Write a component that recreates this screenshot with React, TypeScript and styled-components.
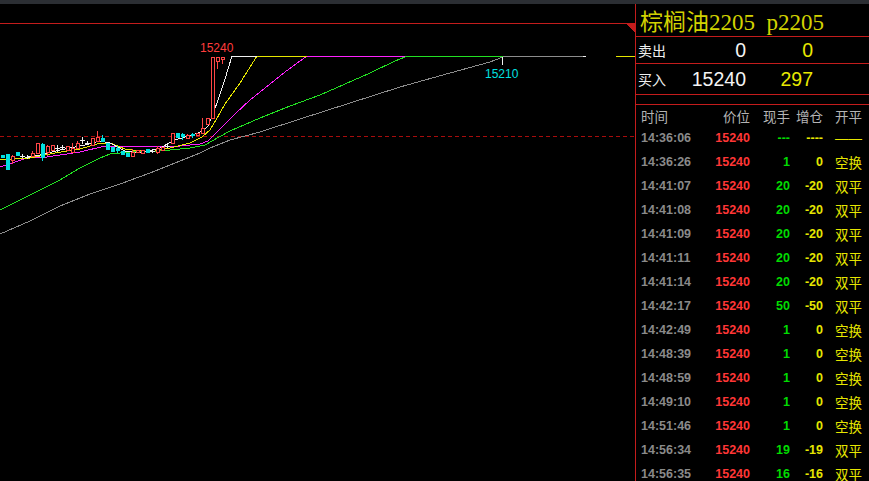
import React from "react"
import styled, { createGlobalStyle } from "styled-components"

const GlobalStyle = createGlobalStyle`
  html, body {
    margin: 0;
    padding: 0;
    background: #000;
    overflow: hidden;
  }
  #root {
    width: 869px;
    height: 481px;
  }
`;

const RED = "#c41c1c";

const Page = styled.div`
  width: 869px;
  height: 481px;
  background: #000;
  display: flex;
  flex-direction: column;
  font-family: "Liberation Sans", "Noto Sans CJK SC", sans-serif;
`;

const TopStrip = styled.div`
  height: 4px;
  background: #2b2e33;
  flex-shrink: 0;
`;

const Main = styled.div`
  flex: 1;
  display: flex;
  min-height: 0;
`;

const ChartArea = styled.div`
  width: 635px;
  flex-shrink: 0;
  svg {
    display: block;
  }
`;

const SidePanel = styled.div`
  flex: 1;
  border-left: 1px solid ${RED};
  display: flex;
  flex-direction: column;
  overflow: hidden;
  & > * {
    flex-shrink: 0;
  }
`;

const Title = styled.div`
  height: 32px;
  border-bottom: 1px solid ${RED};
  display: flex;
  align-items: center;
  padding-left: 4px;
  font-family: "Liberation Serif", "Noto Sans CJK SC", serif;
  font-size: 23px;
  color: #d2d200;
  white-space: pre;
`;

const QuoteRow = styled.div<{ h: number }>`
  height: ${p => p.h}px;
  border-bottom: 1px solid ${RED};
  display: grid;
  grid-template-columns: 40px 68px 67px;
  align-items: center;
  padding-left: 2px;
`;

const QuoteLabel = styled.span`
  font-family: "Noto Sans CJK SC", sans-serif;
  font-size: 14px;
  color: #f0f0f0;
`;

const QuoteValue = styled.span<{ yellow?: boolean }>`
  text-align: right;
  font-size: 19.5px;
  color: ${p => (p.yellow ? "#e8e800" : "#f4f4f4")};
`;

const Spacer = styled.div`
  height: 9px;
  border-bottom: 1px solid ${RED};
`;

const TableGrid = styled.div`
  display: grid;
  grid-template-columns: 70px 39px 40px 33px 1fr;
  grid-auto-rows: 24px;
  grid-template-rows: 21px;
  padding-left: 5px;
  align-items: center;
`;

const HeadCell = styled.span<{ right?: boolean; pad?: boolean }>`
  font-family: "Noto Sans CJK SC", sans-serif;
  font-size: 13.5px;
  color: #b4b4b4;
  text-align: ${p => (p.right ? "right" : "left")};
  padding-left: ${p => (p.pad ? "12px" : "0")};
`;

const Cell = styled.span<{ color: string; right?: boolean }>`
  font-size: 12.5px;
  font-weight: bold;
  color: ${p => p.color};
  text-align: ${p => (p.right ? "right" : "left")};
  white-space: nowrap;
`;

const KindCell = styled.span<{ dash?: boolean }>`
  font-family: ${p => (p.dash ? `"Liberation Sans", sans-serif` : `"Noto Sans CJK SC", sans-serif`)};
  font-size: 13.5px;
  color: #e6e600;
  padding-left: 12px;
  white-space: nowrap;
`;

type Trade = [string, string, string, string, string];

const trades: Trade[] = [
  ["14:36:06", "15240", "---", "----", "——"],
  ["14:36:26", "15240", "1", "0", "空换"],
  ["14:41:07", "15240", "20", "-20", "双平"],
  ["14:41:08", "15240", "20", "-20", "双平"],
  ["14:41:09", "15240", "20", "-20", "双平"],
  ["14:41:11", "15240", "20", "-20", "双平"],
  ["14:41:14", "15240", "20", "-20", "双平"],
  ["14:42:17", "15240", "50", "-50", "双平"],
  ["14:42:49", "15240", "1", "0", "空换"],
  ["14:48:39", "15240", "1", "0", "空换"],
  ["14:48:59", "15240", "1", "0", "空换"],
  ["14:49:10", "15240", "1", "0", "空换"],
  ["14:51:46", "15240", "1", "0", "空换"],
  ["14:56:34", "15240", "19", "-19", "双平"],
  ["14:56:35", "15240", "16", "-16", "双平"],
];

// x, bodyTop, bodyBottom, kind, wickTop, wickBottom
type Candle = [number, number, number, "r" | "c" | "w", number?, number?];

const candles: Candle[] = [
  [2, 155, 158, "c"],
  [7, 154, 170, "c"],
  [12, 156, 160, "r", 155, 164],
  [17, 152, 156, "c"],
  [22, 156, 156, "w", 154, 158],
  [27, 157, 157, "w", 155, 159],
  [32, 153, 156, "r", 151],
  [37, 143, 153, "r"],
  [42, 144, 158, "c", 143, 161],
  [47, 146, 152, "r", 145, 156],
  [52, 145, 150, "r"],
  [57, 148, 148, "w", 145, 152],
  [62, 147, 147, "w", 145, 150],
  [67, 146, 150, "r"],
  [72, 148, 152, "r", 143],
  [77, 143, 148, "r", 141],
  [82, 140, 140, "w", 137, 144],
  [87, 143, 143, "w", 141, 145],
  [92, 138, 145, "r"],
  [97, 137, 141, "r", 131],
  [102, 138, 142, "c", 135],
  [107, 143, 150, "c"],
  [112, 147, 152, "c"],
  [117, 148, 151, "c", 146, 153],
  [122, 151, 155, "c"],
  [127, 153, 157, "c"],
  [132, 152, 156, "r", 149],
  [137, 150, 152, "r"],
  [142, 150, 153, "r"],
  [147, 149, 153, "c"],
  [152, 151, 151, "w", 149, 153],
  [157, 148, 152, "r", 146, 154],
  [162, 147, 150, "r"],
  [167, 146, 146, "w", 143, 148],
  [172, 133, 143, "r"],
  [177, 133, 138, "c"],
  [182, 134, 137, "c", 133, 140],
  [187, 135, 138, "r", 134, 139],
  [192, 134, 136, "c", 133, 138],
  [197, 133, 135, "r"],
  [202, 128, 133, "r", 118],
  [207, 118, 124, "r"],
  [212, 57, 118, "r"],
  [217, 57, 61, "r", 57, 69],
  [222, 57, 59, "r", 57, 64],
];

const pts = (a: number[][]) => a.map(p => p.join(",")).join(" ");

const grayLine = pts([
  [0, 234], [30, 221], [60, 206], [90, 194], [120, 184], [150, 173], [180, 161],
  [200, 153], [210, 148], [230, 140], [260, 132], [300, 119], [350, 103], [400, 87],
  [450, 73], [490, 62], [503, 57], [503, 56], [583, 56],
]);
const greenLine = pts([
  [0, 210], [30, 195], [60, 180], [80, 168], [100, 158], [110, 154], [130, 152],
  [160, 151], [190, 148], [205, 145], [212, 141], [230, 131], [260, 118], [290, 106],
  [320, 95], [345, 84], [370, 73], [395, 61], [405, 57], [405, 56], [503, 56],
]);
const magentaLine = pts([
  [0, 167], [30, 157], [40, 158], [60, 155], [80, 152], [105, 146], [115, 146],
  [150, 147], [180, 146], [200, 144], [208, 141], [220, 129], [235, 114], [250, 100],
  [265, 88], [285, 72], [300, 61], [307, 56], [405, 56],
]);
const yellowLine = pts([
  [0, 160], [30, 158], [55, 153], [80, 149], [100, 143], [110, 143], [125, 149],
  [150, 152], [170, 148], [190, 143], [202, 137], [210, 130], [216, 120], [225, 104],
  [240, 83], [257, 56], [307, 56],
]);
const whiteLine = pts([
  [28, 157], [40, 155], [60, 150], [85, 145], [100, 141], [110, 143], [125, 151],
  [140, 153], [160, 148], [175, 140], [195, 134], [203, 131], [208, 126], [213, 114],
  [218, 100], [225, 79], [232, 56], [257, 56],
]);

const Chart: React.FC = () => (
  <svg width={635} height={477} viewBox="0 4 635 477" shapeRendering="crispEdges">
    <line x1={0} y1={23.5} x2={626} y2={23.5} stroke={RED} />
    <polygon points="626,23 635,23 635,33" fill={RED} />
    <line x1={0} y1={136.5} x2={635} y2={136.5} stroke="#a80c0c" strokeDasharray="4 3" />
    <polyline points={grayLine} fill="none" stroke="#8c8c8c" />
    <polyline points={greenLine} fill="none" stroke="#22e022" />
    <polyline points={magentaLine} fill="none" stroke="#ff20ff" />
    <polyline points={yellowLine} fill="none" stroke="#e6e600" />
    <polyline points={whiteLine} fill="none" stroke="#f0f0f0" />
    <line x1={616} y1={56.5} x2={635} y2={56.5} stroke="#e6e600" />
    <line x1={583} y1={56.5} x2={586} y2={56.5} stroke="#f0f0f0" />
    {candles.map(([x, top, bottom, kind, wt, wb], i) => {
      const color = kind === "r" ? "#ff4646" : kind === "c" ? "#00e0e0" : "#f0f0f0";
      return (
        <g key={i}>
          {(wt !== undefined || wb !== undefined) && (
            <line x1={x + 0.5} y1={wt ?? top} x2={x + 0.5} y2={wb ?? bottom} stroke={color} />
          )}
          {kind === "w" ? (
            <line x1={x - 2} y1={top + 0.5} x2={x + 3} y2={top + 0.5} stroke={color} />
          ) : kind === "r" ? (
            <rect x={x - 1 + 0.5} y={top + 0.5} width={3} height={Math.max(bottom - top, 1)} fill="#000" stroke={color} />
          ) : (
            <rect x={x - 1} y={top} width={4} height={Math.max(bottom - top, 2)} fill={color} />
          )}
        </g>
      );
    })}
    <line x1={502.5} y1={57} x2={502.5} y2={65} stroke="#f0f0f0" />
    <text x={200} y={52} fill="#ff3c3c" fontSize={12} fontFamily="Liberation Sans, sans-serif">15240</text>
    <text x={485} y={78} fill="#00e0e0" fontSize={12} fontFamily="Liberation Sans, sans-serif">15210</text>
  </svg>
);

const App: React.FC = () => (
  <>
    <GlobalStyle />
    <Page>
      <TopStrip />
      <Main>
        <ChartArea>
          <Chart />
        </ChartArea>
        <SidePanel>
          <Title>{"棕榈油2205  p2205"}</Title>
          <QuoteRow h={26}>
            <QuoteLabel>卖出</QuoteLabel>
            <QuoteValue>0</QuoteValue>
            <QuoteValue yellow>0</QuoteValue>
          </QuoteRow>
          <QuoteRow h={30}>
            <QuoteLabel>买入</QuoteLabel>
            <QuoteValue>15240</QuoteValue>
            <QuoteValue yellow>297</QuoteValue>
          </QuoteRow>
          <Spacer />
          <TableGrid>
            <HeadCell>时间</HeadCell>
            <HeadCell right>价位</HeadCell>
            <HeadCell right>现手</HeadCell>
            <HeadCell right>增仓</HeadCell>
            <HeadCell pad>开平</HeadCell>
            {trades.map(([time, price, hand, inc, kind]) => (
              <React.Fragment key={time}>
                <Cell color="#8a8a8a">{time}</Cell>
                <Cell color="#ff3636" right>{price}</Cell>
                <Cell color="#00dc00" right>{hand}</Cell>
                <Cell color="#e6e600" right>{inc}</Cell>
                <KindCell dash={kind === "——"}>{kind}</KindCell>
              </React.Fragment>
            ))}
          </TableGrid>
        </SidePanel>
      </Main>
    </Page>
  </>
);

export default App;
